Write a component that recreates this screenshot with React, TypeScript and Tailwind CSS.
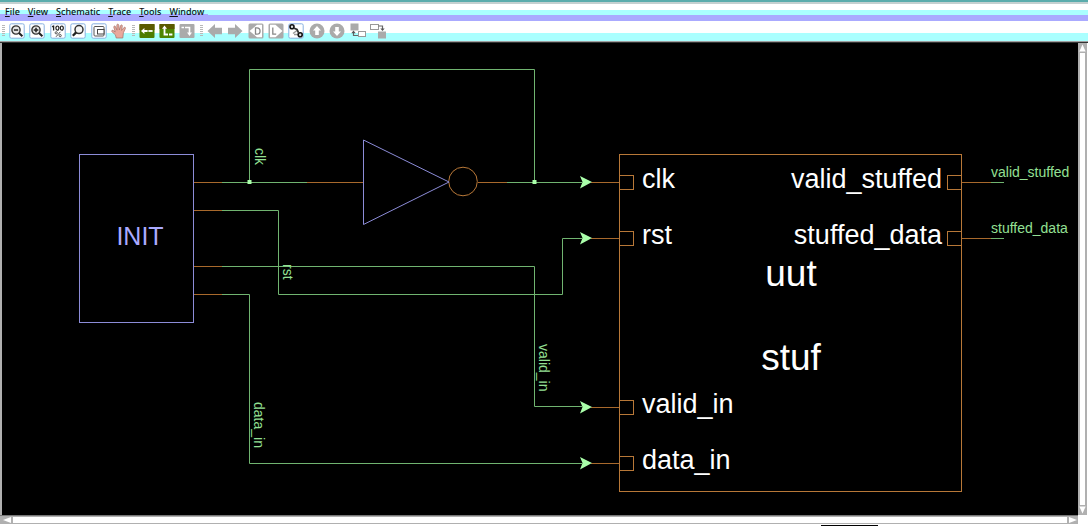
import type { ReactNode } from "react";

const MENUS = ["File", "View", "Schematic", "Trace", "Tools", "Window"];

function Framed({ children }: { children: ReactNode }) {
  return (
    <>
      <rect x="0.8" y="0.8" width="14.4" height="14.4" rx="1.5" fill="#ffffff" stroke="#88b0e0" />
      {children}
    </>
  );
}

type Tool = { label: string; art: ReactNode; disabled?: boolean };

const ZOOM_OUT: Tool = {
  label: "Zoom out",
  art: (
    <Framed>
      <circle cx="7" cy="7" r="4.1" fill="#e4e4e4" stroke="#333" strokeWidth="1.4" />
      <path d="M4.9 7h4.2" stroke="#222" strokeWidth="1.5" />
      <path d="M10 10l3.4 3.2" stroke="#222" strokeWidth="2.1" />
    </Framed>
  ),
};
const ZOOM_IN: Tool = {
  label: "Zoom in",
  art: (
    <Framed>
      <circle cx="7" cy="7" r="4.1" fill="#e4e4e4" stroke="#333" strokeWidth="1.4" />
      <path d="M4.7 7h4.6M7 4.7v4.6" stroke="#222" strokeWidth="1.5" />
      <path d="M10 10l3.4 3.2" stroke="#222" strokeWidth="2.1" />
    </Framed>
  ),
};
const ZOOM_FULL: Tool = {
  label: "Zoom 100 %",
  art: (
    <Framed>
      <path d="M3.6 2.6v5M2.2 4l1.4-1.2" stroke="#222" fill="none" strokeWidth="1.3" />
      <ellipse cx="7.4" cy="5.1" rx="1.5" ry="2.1" fill="none" stroke="#222" strokeWidth="1.2" />
      <ellipse cx="11.8" cy="5.1" rx="1.5" ry="2.1" fill="none" stroke="#222" strokeWidth="1.2" />
      <path d="M10.4 8.8L6 13.8" stroke="#555" />
      <circle cx="6.2" cy="9.8" r="1.1" fill="none" stroke="#555" />
      <circle cx="10.2" cy="12.6" r="1.1" fill="none" stroke="#555" />
    </Framed>
  ),
};
const ZOOM_AREA: Tool = {
  label: "Zoom area",
  art: (
    <Framed>
      <circle cx="9" cy="6.6" r="4" fill="#f4f4f4" stroke="#333" strokeWidth="1.5" />
      <path d="M6.2 9.4L2.8 12.8" stroke="#222" strokeWidth="2.3" />
    </Framed>
  ),
};
const OVERVIEW: Tool = {
  label: "Overview",
  art: (
    <Framed>
      <rect x="3" y="3.5" width="10" height="9.5" rx="1" fill="#fff" stroke="#555" />
      <rect x="6.5" y="6.5" width="6.5" height="4.5" fill="#fff" stroke="#444" />
    </Framed>
  ),
};
const PAN: Tool = {
  label: "Pan",
  art: (
    <path
      d="M5.2 15L4.4 11.8 0.8 8.6c-.6-1 .6-1.8 1.6-1L4.2 9 2.8 4.2c-.2-1.3 1.3-1.7 1.8-.4L6 7.2 5.8 2.2c0-1.4 1.8-1.4 2 0L8.3 7 9.6 2.6c.4-1.2 2-.8 1.7.6L10.6 7.4 12.9 4.6c.9-.9 2 0 1.4 1.1L12.4 9.8 11.8 15z"
      fill="#e9a99c"
      stroke="#a07068"
      strokeWidth="0.7"
    />
  ),
};
const TRACE_BACK: Tool = {
  label: "Trace driver",
  art: (
    <>
      <rect x="0.5" y="1" width="15" height="14" rx="1" fill="#4d7d00" />
      <path d="M0.5 1h15v6h-15z" fill="#5b5a00" />
      <path d="M2 8l3.4-3v2h3.2v2H5.4v2z" fill="#fff" />
      <path d="M9.4 8h4.2" stroke="#fff" strokeWidth="1.8" />
    </>
  ),
};
const TRACE_UP: Tool = {
  label: "Trace load",
  art: (
    <>
      <rect x="0.5" y="1" width="15" height="14" rx="1" fill="#4d8500" />
      <path d="M0.5 1h15v5h-15z" fill="#5b5a00" />
      <path d="M5.5 2.4L8 5.8H3z" fill="#fff" />
      <path d="M5.5 5v6.5H9M10 11.5h3.4" stroke="#fff" strokeWidth="1.8" fill="none" />
    </>
  ),
};
const TRACE_DOWN: Tool = {
  label: "Trace path",
  disabled: true,
  art: (
    <>
      <rect x="0.5" y="1" width="15" height="14" rx="1" fill="#aaaaaa" />
      <path d="M2.5 4.5H5M6 4.5h4.5V10" stroke="#fff" strokeWidth="1.6" fill="none" />
      <path d="M10.5 13L8 9.6h5z" fill="#fff" />
    </>
  ),
};
const BACK: Tool = {
  label: "Back",
  disabled: true,
  art: <path d="M0.5 8L8 1v3.8h7v6.4H8V15z" fill="#aaaaaa" />,
};
const FORWARD: Tool = {
  label: "Forward",
  disabled: true,
  art: <path d="M15.5 8L8 1v3.8H1v6.4h7V15z" fill="#aaaaaa" />,
};
const DRIVERS: Tool = {
  label: "Drivers",
  disabled: true,
  art: (
    <>
      <rect x="0.5" y="0.5" width="15" height="15" rx="1.5" fill="#aaaaaa" />
      <path d="M1.5 8L9 1.8h5v12.4H9z" fill="#ffffff" />
      <path d="M7.5 4.8h1.4c4.2 0 4.2 6.4 0 6.4H7.5z" fill="none" stroke="#888" strokeWidth="1.3" />
    </>
  ),
};
const LOADS: Tool = {
  label: "Loads",
  disabled: true,
  art: (
    <>
      <rect x="0.5" y="0.5" width="15" height="15" rx="1.5" fill="#aaaaaa" />
      <path d="M14.5 8L7.5 1.8H2v12.4h5.5z" fill="#ffffff" />
      <path d="M4.8 4.5v6.7h3.4" fill="none" stroke="#888" strokeWidth="1.3" />
    </>
  ),
};
const CONNECT: Tool = {
  label: "Connectivity",
  art: (
    <Framed>
      <path d="M5 10.5l4-3M6 11.5h4" stroke="#999" fill="none" strokeWidth="1.4" />
      <circle cx="4" cy="3.8" r="2" fill="#ddd" stroke="#111" strokeWidth="1.6" />
      <circle cx="12.2" cy="11.8" r="2" fill="#ddd" stroke="#111" strokeWidth="1.6" />
      <path d="M5.6 5l3.4 1.4 1.6 3.4" stroke="#333" strokeWidth="1.8" fill="none" />
    </Framed>
  ),
};
const UP: Tool = {
  label: "Up",
  disabled: true,
  art: (
    <>
      <circle cx="8" cy="8" r="7.5" fill="#aaaaaa" />
      <path d="M8 3l4 4.4H9.8V12H6.2V7.4H4z" fill="#fff" />
    </>
  ),
};
const DOWN: Tool = {
  label: "Down",
  disabled: true,
  art: (
    <>
      <circle cx="8" cy="8" r="7.5" fill="#aaaaaa" />
      <path d="M8 13l4-4.4H9.8V4H6.2v4.6H4z" fill="#fff" />
    </>
  ),
};
const POP: Tool = {
  label: "Pop hierarchy",
  disabled: true,
  art: (
    <>
      <rect x="0.5" y="0.5" width="8" height="7" fill="#aaaaaa" />
      <rect x="8.5" y="8.5" width="7" height="5" fill="#fff" stroke="#999" />
      <path d="M3.5 9v3.5H8" stroke="#666" strokeWidth="1.2" fill="none" />
      <path d="M3.5 7.6l2.2 2.6H1.3z" fill="#555" />
    </>
  ),
};
const PUSH: Tool = {
  label: "Push hierarchy",
  disabled: true,
  art: (
    <>
      <rect x="8" y="8.5" width="8" height="7" fill="#aaaaaa" />
      <rect x="0.5" y="1.5" width="8" height="5" fill="#fff" stroke="#999" />
      <path d="M8.5 3h4v3" stroke="#666" strokeWidth="1.2" fill="none" />
      <path d="M12.5 8l2.2-2.6h-4.4z" fill="#555" />
    </>
  ),
};

const BARS: Tool[][][] = [
  [
    [ZOOM_OUT, ZOOM_IN],
    [ZOOM_FULL, ZOOM_AREA],
    [OVERVIEW, PAN],
  ],
  [[TRACE_BACK, TRACE_UP, TRACE_DOWN]],
  [
    [BACK, FORWARD],
    [DRIVERS, LOADS, CONNECT],
    [UP, DOWN],
    [POP, PUSH],
  ],
];

function Grip() {
  return (
    <svg className="h-3 w-[3px]" viewBox="0 0 3 12" aria-hidden="true">
      {[0, 2, 4, 6, 8, 10].map((y) => (
        <rect key={y} y={y} width="3" height="1" fill="#b8b8b8" />
      ))}
    </svg>
  );
}

function Toolbar() {
  return (
    <div
      role="toolbar"
      aria-label="Schematic tools"
      className="flex h-5 shrink-0 items-center gap-[5px] bg-[linear-gradient(#ffffff_12px,#aaffff_12px)] pl-[2px]"
    >
      {BARS.map((bar, b) => (
        <div key={b} className="flex items-center gap-1">
          <Grip />
          <div className="flex gap-[5px]">
            {bar.map((group, g) => (
              <div key={g} className="flex gap-1">
                {group.map((tool) => (
                  <button key={tool.label} type="button" aria-label={tool.label} disabled={tool.disabled} className="size-4">
                    <svg viewBox="0 0 16 16" className="size-4">
                      {tool.art}
                    </svg>
                  </button>
                ))}
              </div>
            ))}
          </div>
        </div>
      ))}
    </div>
  );
}

const INPUTS = [
  { name: "clk", y: 182 },
  { name: "rst", y: 238 },
  { name: "valid_in", y: 407 },
  { name: "data_in", y: 463 },
];
const OUTPUTS = [
  { name: "valid_stuffed", y: 182 },
  { name: "stuffed_data", y: 238 },
];
const NET_NAMES = [
  { name: "clk", x: 255, y: 148 },
  { name: "rst", x: 283, y: 264 },
  { name: "valid_in", x: 539, y: 344 },
  { name: "data_in", x: 254, y: 402 },
];

function Schematic() {
  return (
    <svg
      viewBox="2 43 1076 472"
      className="block h-full w-full font-['Liberation_Sans',sans-serif]"
      role="img"
      aria-label="Schematic of uut"
      fill="none"
    >
      <g stroke="#70b470">
        <path d="M222 182.5H307M249.5 182V69.5H534.5V182M507 182.5H582" />
        <path d="M222 210.5H278.5V294.5H562.5V238.5H582" />
        <path d="M222 266.5H534.5V406.5H582" />
        <path d="M222 294.5H249.5V463.5H582" />
        <path d="M991 182.5H1004M991 238.5H1004" />
      </g>
      <g stroke="#a8692c">
        <path d="M193 182.5H222M193 210.5H222M193 266.5H222M193 294.5H222M307 182.5H363M478 182.5H507" />
        <path d="M962 182.5H991M962 238.5H991" />
        {INPUTS.map((p) => (
          <path key={p.name} d={`M591 ${p.y + 0.5}H619`} />
        ))}
      </g>
      <g stroke="#b87838">
        <circle cx="463" cy="181.5" r="14.3" />
        <rect x="619.5" y="154.5" width="342" height="337" />
        {INPUTS.map((p) => (
          <rect key={p.name} x="619.5" y={p.y - 6.5} width="14" height="14" />
        ))}
        {OUTPUTS.map((p) => (
          <rect key={p.name} x="947.5" y={p.y - 6.5} width="14" height="14" />
        ))}
      </g>
      <g stroke="#8c8cd8">
        <rect x="79.5" y="154.5" width="114" height="168" />
        <path d="M363.5 140L449 182L363.5 224.5Z" />
      </g>
      <g fill="#aaffaa">
        <rect x="247.5" y="180" width="4" height="4" />
        <rect x="532.5" y="180" width="4" height="4" />
        {INPUTS.map((p) => (
          <path key={p.name} d={`M592 ${p.y}l-12 -6l2.5 6l-2.5 6.5z`} />
        ))}
      </g>
      <text x="140" y="245" textAnchor="middle" fontSize="25" fill="#aaaaff">
        INIT
      </text>
      <g fill="#ffffff" fontSize="27">
        {INPUTS.map((p) => (
          <text key={p.name} x="642" y={p.y + 6}>
            {p.name}
          </text>
        ))}
        {OUTPUTS.map((p) => (
          <text key={p.name} x="942" y={p.y + 6} textAnchor="end">
            {p.name}
          </text>
        ))}
      </g>
      <g fill="#ffffff" fontSize="37" textAnchor="middle">
        <text x="791" y="286">
          uut
        </text>
        <text x="791" y="370">
          stuf
        </text>
      </g>
      <g fill="#94e094" fontSize="14">
        {NET_NAMES.map((n) => (
          <text key={n.name} transform={`translate(${n.x} ${n.y}) rotate(90)`}>
            {n.name}
          </text>
        ))}
        {OUTPUTS.map((p) => (
          <text key={p.name} x="991" y={p.y - 5}>
            {p.name}
          </text>
        ))}
      </g>
    </svg>
  );
}

function ScrollArrow({ label, path }: { label: string; path: string }) {
  return (
    <button type="button" aria-label={label} className="flex shrink-0 items-center justify-center bg-[#b0b0b0]">
      <svg viewBox="0 0 10 10" className="size-[10px]">
        <path d={path} fill="#ffffff" />
      </svg>
    </button>
  );
}

export default function App() {
  return (
    <div className="flex h-screen flex-col overflow-hidden bg-white">
      <div className="h-[2px] shrink-0 bg-[#5aacac]" />
      <div className="h-[2px] shrink-0 bg-[#c4d0d0]" />
      <nav
        aria-label="Main menu"
        className="flex h-[17px] shrink-0 bg-[linear-gradient(#ffffff_6px,#aaffff_6px,#aaffff_11px,#aaaaff_11px)]"
      >
        <div className="flex items-center gap-2 bg-[linear-gradient(#ffffff_6px,#aaffff_6px,#aaffff_10px,#aaaaff_10px)] pr-1 pb-[2px] pl-[5px] font-['Noto_Sans',sans-serif] text-[9px] leading-[14px] font-medium text-[#111111]">
          {MENUS.map((menu) => (
            <button key={menu} type="button">
              <span className="underline underline-offset-1">{menu[0]}</span>
              {menu.slice(1)}
            </button>
          ))}
        </div>
      </nav>
      <Toolbar />
      <div className="h-[2px] shrink-0 border-b border-[#333333] bg-[#a0a0a0]" />
      <div className="flex min-h-0 flex-1">
        <main className="min-w-0 flex-1 border-l-2 border-[#b0b0b0] bg-black">
          <Schematic />
        </main>
        <div className="flex w-[10px] shrink-0 flex-col border-r border-white bg-[#b0b0b0]">
          <ScrollArrow label="Scroll up" path="M5 1L8.5 9H1.5z" />
          <div className="flex-1 border-x-2 border-[#b0b0b0] bg-white" />
          <ScrollArrow label="Scroll down" path="M5 9L8.5 1H1.5z" />
        </div>
      </div>
      <div className="flex h-[11px] shrink-0 flex-col">
        <div className="mr-[10px] flex h-[9px] border-t border-[#777777] bg-[#b0b0b0] pl-[2px]">
          <ScrollArrow label="Scroll left" path="M1 5L9 2V8z" />
          <div className="mx-[1px] flex-1 border-y border-[#b0b0b0] bg-white" />
          <ScrollArrow label="Scroll right" path="M9 5L1 2V8z" />
        </div>
        <div className="flex h-[2px] justify-end pr-[210px]">
          <div className="w-[57px] border-b border-black" />
        </div>
      </div>
    </div>
  );
}
